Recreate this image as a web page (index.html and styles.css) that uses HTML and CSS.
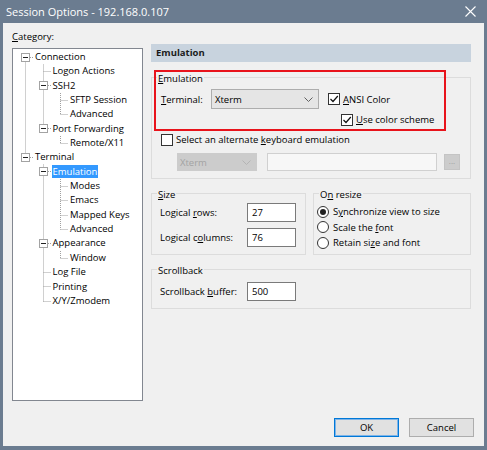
FILE: index.html
```html
<!DOCTYPE html>
<html>
<head>
<meta charset="utf-8">
<title>Session Options</title>
<link rel="stylesheet" href="styles.css">
</head>
<body>
<div class="window">
  <div class="titlebar">
    <span class="title">Session Options - 192.168.0.107</span>
    <svg class="close" width="11" height="11" viewBox="0 0 11 11"><path d="M0.5 0.5 L10.5 10.5 M10.5 0.5 L0.5 10.5" stroke="#fff" stroke-width="1.1" fill="none"/></svg>
  </div>
  <div class="client">
    <div class="main">
      <div class="left">
        <div class="cat"><u>C</u>ategory:</div>
        <div class="tree">
          <svg class="lines" width="129" height="351" viewBox="0 0 129 351">
            <g stroke="#a0a0a0" stroke-width="1" stroke-dasharray="1 1" fill="none">
              <path d="M12.5 8.5 V108.5"/>
              <path d="M30.5 15.5 V79.5"/>
              <path d="M30.5 115.5 V252.5"/>
              <path d="M47.5 44 V65.5"/>
              <path d="M47.5 87 V94.5"/>
              <path d="M47.5 130 V180.5"/>
              <path d="M47.5 202 V209.5"/>
              <path d="M17 8.5 H20"/>
              <path d="M17 108.5 H20"/>
              <path d="M30.5 22.5 H38"/>
              <path d="M35 36.5 H38"/>
              <path d="M35 79.5 H38"/>
              <path d="M35 122.5 H38"/>
              <path d="M35 194.5 H38"/>
              <path d="M30.5 223.5 H38"/>
              <path d="M30.5 237.5 H38"/>
              <path d="M30.5 252.5 H38"/>
              <path d="M47.5 51.5 H55"/>
              <path d="M47.5 65.5 H55"/>
              <path d="M47.5 94.5 H55"/>
              <path d="M47.5 137.5 H55"/>
              <path d="M47.5 151.5 H55"/>
              <path d="M47.5 166.5 H55"/>
              <path d="M47.5 180.5 H55"/>
              <path d="M47.5 209.5 H55"/>
            </g>
            <g stroke="#a3a3a3" fill="#fff">
              <rect x="8.5" y="4.5" width="8" height="8"/>
              <rect x="8.5" y="104.5" width="8" height="8"/>
              <rect x="26.5" y="32.5" width="8" height="8"/>
              <rect x="26.5" y="75.5" width="8" height="8"/>
              <rect x="26.5" y="118.5" width="8" height="8"/>
              <rect x="26.5" y="190.5" width="8" height="8"/>
            </g>
            <g stroke="#222" fill="none">
              <path d="M10 8.5 H15"/>
              <path d="M10 108.5 H15"/>
              <path d="M28 36.5 H33"/>
              <path d="M28 79.5 H33"/>
              <path d="M28 122.5 H33"/>
              <path d="M28 194.5 H33"/>
            </g>
          </svg>
          <div class="node l0"><span>Connection</span></div>
          <div class="node l1"><span>Logon Actions</span></div>
          <div class="node l1"><span>SSH2</span></div>
          <div class="node l2"><span>SFTP Session</span></div>
          <div class="node l2"><span>Advanced</span></div>
          <div class="node l1"><span>Port Forwarding</span></div>
          <div class="node l2"><span>Remote/X11</span></div>
          <div class="node l0"><span>Terminal</span></div>
          <div class="node l1 sel"><span>Emulation</span></div>
          <div class="node l2"><span>Modes</span></div>
          <div class="node l2"><span>Emacs</span></div>
          <div class="node l2"><span>Mapped Keys</span></div>
          <div class="node l2"><span>Advanced</span></div>
          <div class="node l1"><span>Appearance</span></div>
          <div class="node l2"><span>Window</span></div>
          <div class="node l1"><span>Log File</span></div>
          <div class="node l1"><span>Printing</span></div>
          <div class="node l1"><span>X/Y/Zmodem</span></div>
        </div>
      </div>
      <div class="right">
        <div class="header">Emulation</div>

        <div class="group emu">
          <div class="legend"><u>E</u>mulation</div>
          <div class="gbody">
            <div class="row term">
              <span class="lbl"><u>T</u>erminal:</span>
              <div class="combo"><span>Xterm</span><svg width="9" height="5" viewBox="0 0 9 5"><path d="M0.5 0.5 L4.5 4.5 L8.5 0.5" stroke="#606060" fill="none"/></svg></div>
              <div class="check ansi"><span class="cb"><svg width="10" height="10" viewBox="0 0 10 10"><path d="M1.5 5 L4 7.5 L8.8 2" stroke="#111" stroke-width="1.2" fill="none"/></svg></span><span><u>A</u>NSI Color</span></div>
            </div>
            <div class="row scheme">
              <div class="check"><span class="cb"><svg width="10" height="10" viewBox="0 0 10 10"><path d="M1.5 5 L4 7.5 L8.8 2" stroke="#111" stroke-width="1.2" fill="none"/></svg></span><span><u>U</u>se color scheme</span></div>
            </div>
            <div class="row alt">
              <div class="check"><span class="cb"></span><span>Select an alternate <u>k</u>eyboard emulation</span></div>
            </div>
            <div class="row dis">
              <div class="combo disabled"><span>Xterm</span><svg width="9" height="5" viewBox="0 0 9 5"><path d="M0.5 0.5 L4.5 4.5 L8.5 0.5" stroke="#b4b4b4" fill="none"/></svg></div>
              <div class="edit-dis"></div>
              <div class="dots">...</div>
            </div>
          </div>
        </div>

        <div class="pair">
          <div class="group size">
            <div class="legend"><u>S</u>ize</div>
            <div class="gbody">
              <div class="row field first">
                <span class="flbl">Logical <u>r</u>ows:</span>
                <div class="edit">27</div>
              </div>
              <div class="row field">
                <span class="flbl">Logical c<u>o</u>lumns:</span>
                <div class="edit">76</div>
              </div>
            </div>
          </div>
          <div class="group resize">
            <div class="legend">O<u>n</u> resize</div>
            <div class="gbody radios">
              <div class="radio"><span class="rb on"></span><span>S<u>y</u>nchronize view to size</span></div>
              <div class="radio"><span class="rb"></span><span>Scale the <u>f</u>ont</span></div>
              <div class="radio"><span class="rb"></span><span>Retain si<u>z</u>e and font</span></div>
            </div>
          </div>
        </div>

        <div class="group scroll">
          <div class="legend">Scrollback</div>
          <div class="gbody">
            <div class="row field first">
              <span class="flbl">Scrollback <u>b</u>uffer:</span>
              <div class="edit">500</div>
            </div>
          </div>
        </div>

        <div class="annot"></div>
      </div>
    </div>
    <div class="buttons">
      <div class="btn default">OK</div>
      <div class="btn">Cancel</div>
    </div>
  </div>
</div>
</body>
</html>
```

FILE: styles.css
```css
* { box-sizing: border-box; }
html, body { margin: 0; padding: 0; }
body {
  width: 487px;
  height: 450px;
  overflow: hidden;
  background: #6b7c90;
  font-family: "Open Sans", "Noto Sans", sans-serif;
  font-size: 9.5px;
  color: #000;
}
.window {
  width: 487px;
  height: 450px;
  display: flex;
  flex-direction: column;
}
.titlebar {
  height: 23px;
  flex: none;
  display: flex;
  align-items: center;
  justify-content: space-between;
  padding: 0 11px 0 6px;
  color: #fff;
}
.title { font-size: 11px; }
.close { display: block; }

.client {
  flex: 1;
  margin: 0 3px 4px 3px;
  background: #f0f0f0;
  display: flex;
  flex-direction: column;
  padding: 7px 10px 9px 9px;
}
.main {
  display: flex;
  gap: 8px;
  align-items: flex-start;
}
.left { width: 131px; flex: none; }
.cat { height: 14px; line-height: 14px; }
.tree {
  position: relative;
  margin-top: 4px;
  height: 353px;
  background: #fff;
  border: 1px solid #828790;
  padding-top: 1px;
}
.lines { position: absolute; left: 0; top: 0; }
.node {
  position: relative;
  height: 14.35px;
  line-height: 14.35px;
  white-space: nowrap;
}
.node span { padding: 0 1px; }
.l0 { padding-left: 21px; }
.l1 { padding-left: 38.5px; }
.l2 { padding-left: 56px; }
.sel span { background: #3399ff; color: #fff; }

.right {
  position: relative;
  width: 320px;
  flex: none;
  padding-top: 14px;
}
.header {
  height: 18px;
  line-height: 18px;
  padding-left: 5px;
  background: #c8d3de;
  font-weight: bold;
  color: #1b1b1b;
}
.group {
  border: 1px solid #dcdcdc;
}
.legend {
  display: table;
  height: 13px;
  line-height: 13px;
  margin: -6px 0 0 5px;
  padding: 0 1px;
  background: #f0f0f0;
}
.row { display: flex; align-items: center; }

.emu { margin-top: 15px; }
.emu .gbody { padding: 0 0 7px 9px; }
.term { margin-top: 4px; height: 20px; }
.lbl { width: 50px; }
.combo {
  display: flex;
  align-items: center;
  justify-content: space-between;
  width: 108px;
  height: 20px;
  padding: 0 5px 0 3px;
  background: #e5e5e5;
  border: 1px solid #adadad;
}
.combo svg { display: block; }
.check { display: flex; align-items: center; gap: 3px; }
.ansi { margin-left: 9px; }
.cb {
  width: 12px;
  height: 12px;
  flex: none;
  border: 1px solid #333;
  background: #fff;
  display: flex;
  align-items: center;
  justify-content: center;
}
.cb svg { display: block; }
.scheme { margin-top: 4px; height: 13px; padding-left: 180px; }
.alt { margin-top: 7px; height: 13px; }
.dis { margin-top: 7px; height: 18px; padding-left: 16px; }
.combo.disabled {
  width: 80px;
  height: 18px;
  padding-left: 2px;
  background: #cccccc;
  border-color: #cccccc;
  color: #a3a3a3;
}
.edit-dis {
  width: 170px;
  height: 18px;
  margin-left: 10px;
  background: #f7f7f7;
  border: 1px solid #d0d0d0;
}
.dots {
  width: 16px;
  height: 16px;
  margin-left: 7px;
  background: #cccccc;
  border: 1px solid #c4c4c4;
  color: #9f9f9f;
  font-size: 8px;
  line-height: 12px;
  text-align: center;
}

.pair { display: flex; margin-top: 14px; }
.size { width: 155px; flex: none; }
.size .gbody { padding: 0 0 6px 8px; }
.resize { flex: 1; margin-left: 7px; }
.resize .gbody { padding: 0 0 3px 3px; }
.field { height: 19px; margin-top: 6px; }
.field.first { margin-top: 2px; }
.flbl { width: 87px; flex: none; }
.edit {
  width: 49px;
  height: 19px;
  line-height: 17px;
  padding-left: 4px;
  background: #fff;
  border: 1px solid #7a7a7a;
}
.radios { margin-top: 3px; }
.radio {
  height: 15.5px;
  display: flex;
  align-items: center;
  gap: 4px;
}
.rb {
  width: 12px;
  height: 12px;
  flex: none;
  border: 1px solid #333;
  border-radius: 50%;
  background: #fff;
  display: flex;
  align-items: center;
  justify-content: center;
}
.rb.on::after {
  content: "";
  width: 6px;
  height: 6px;
  border-radius: 50%;
  background: #222;
}
.scroll { margin-top: 14px; }
.scroll .gbody { padding: 0 0 7px 8px; }
.scroll .field.first { margin-top: 5px; }

.annot {
  position: absolute;
  left: 3px;
  top: 40px;
  width: 292px;
  height: 61px;
  border: 2px solid #e8131b;
}

.buttons {
  margin-top: auto;
  display: flex;
  justify-content: flex-end;
  gap: 10px;
}
.btn {
  width: 65px;
  height: 19px;
  line-height: 17px;
  text-align: center;
  background: #e1e1e1;
  border: 1px solid #adadad;
}
.btn.default {
  border-color: #0078d7;
  box-shadow: inset 0 0 0 1px #7eb4e8;
}
```
